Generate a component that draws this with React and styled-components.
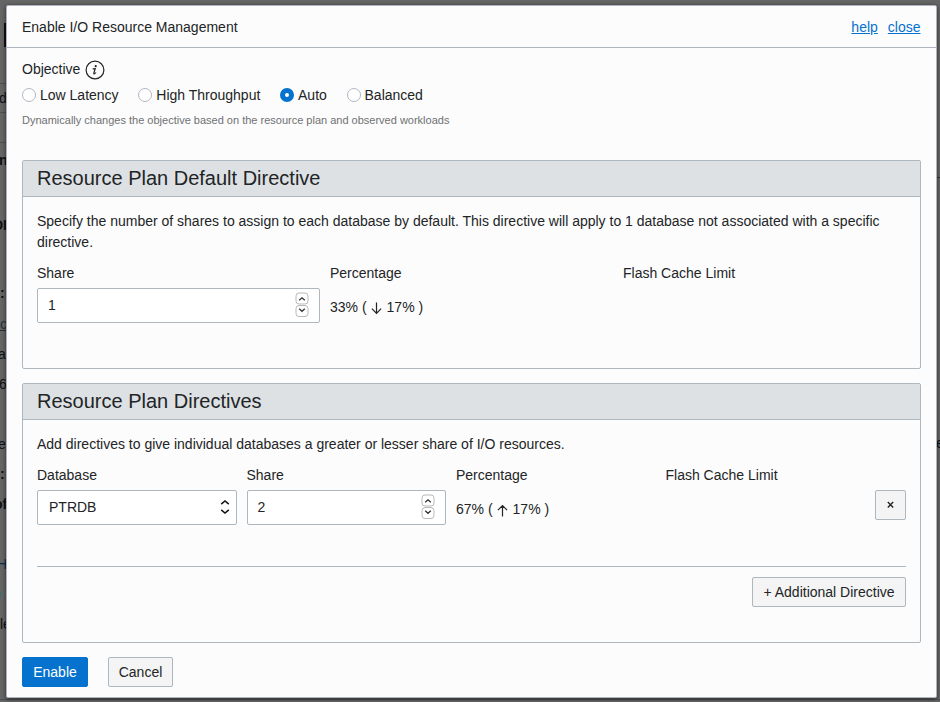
import React from "react";
import styled, { createGlobalStyle } from "styled-components";

const GlobalStyle = createGlobalStyle`
  *, *::before, *::after { box-sizing: border-box; }
  body {
    margin: 0;
    overflow: hidden;
    font: 14px/21px "Liberation Sans", Arial, sans-serif;
    color: #222426;
  }
  button, input { font: inherit; color: inherit; }
`;

const Page = styled.div`
  position: relative;
  width: 940px;
  height: 702px;
  overflow: hidden;
  background: #656565;
`;

const PageText = styled.span`
  position: absolute;
  left: ${(p) => p.$x}px;
  top: ${(p) => p.$y}px;
  line-height: 18px;
  white-space: nowrap;
  color: ${(p) => p.$color || "#101011"};
  font-weight: ${(p) => (p.$bold ? 700 : 400)};
  text-decoration: ${(p) => (p.$link ? "underline" : "none")};
`;

const PageMark = styled.span`
  position: absolute;
  left: ${(p) => p.$x}px;
  top: ${(p) => p.$y}px;
  width: ${(p) => p.$w}px;
  height: ${(p) => p.$h}px;
  background: ${(p) => p.$color || "#4d4f51"};
`;

const Dialog = styled.section`
  position: absolute;
  left: 6px;
  top: 5px;
  width: 931px;
  height: 693px;
  border: 1px solid #adb4c0;
  border-radius: 2px;
  background: #fcfcfc;
  box-shadow: 0 1px 4px rgba(0, 0, 0, 0.6);
`;

const Header = styled.header`
  display: flex;
  justify-content: space-between;
  height: 42px;
  padding: 11px 15.5px 0 15px;
  border-bottom: 1px solid #adb4c0;
`;

const Links = styled.nav`
  display: flex;
  gap: 10px;
`;

const Link = styled.a`
  color: #0572ce;
  text-decoration: underline;
`;

const Body = styled.div`
  padding: 11px 15px 0;
`;

const Objective = styled.div`
  display: flex;
  align-items: center;
  height: 21px;
  gap: 5px;
  svg { margin-top: 1px; }
`;

const Choices = styled.div`
  display: flex;
  gap: 19.7px;
  margin-top: 5px;
`;

const Choice = styled.label`
  display: flex;
  align-items: flex-start;
  gap: 4px;
  white-space: nowrap;
`;

const Radio = styled.span`
  width: 14px;
  height: 14px;
  margin-top: 3px;
  border-radius: 50%;
  border: ${(p) => (p.$on ? "5px solid #0572ce" : "1px solid #b1b8c2")};
  background: #fff;
`;

const Hint = styled.p`
  margin: 6px 0 0;
  font-size: 11px;
  line-height: 16px;
  color: #6f7173;
`;

const Panel = styled.section`
  height: ${(p) => p.$height}px;
  margin-top: ${(p) => p.$gap}px;
  border: 1px solid #adb7c0;
  border-radius: 2px;
`;

const PanelTitle = styled.h2`
  margin: 0;
  height: 36px;
  padding: 0 14px;
  border-bottom: 1px solid #adb7c0;
  background: #dde1e4;
  font-size: 20px;
  font-weight: 400;
  line-height: 34px;
`;

const PanelBody = styled.div`
  padding: 14px 14px 0;
`;

const Description = styled.p`
  margin: 0;
`;

const Fields = styled.div`
  display: grid;
  grid-template-columns: ${(p) => p.$columns};
  column-gap: 10px;
  margin-top: 10px;
`;

const Field = styled.div`
  display: flex;
  flex-direction: column;
`;

const Label = styled.span`
  height: 25px;
`;

const InputBox = styled.div`
  display: flex;
  align-items: flex-start;
  justify-content: space-between;
  height: 35px;
  padding: 0 ${(p) => p.$right || 10}px 0 ${(p) => p.$left || 10}px;
  border: 1px solid #adb7c0;
  border-radius: 2px;
  background: #fff;
`;

const Value = styled.span`
  line-height: 33px;
`;

const StepperIcon = styled.svg`
  margin-top: 3px;
`;

const SelectIcon = styled.svg`
  margin-top: 8px;
`;

const Percentage = styled.div`
  display: flex;
  align-items: center;
  height: 21px;
  margin-top: 9px;
  white-space: pre;
  svg { margin: 1px 5px 0 4px; }
`;

const Button = styled.button`
  display: inline-flex;
  align-items: center;
  justify-content: center;
  width: ${(p) => p.$width};
  height: 30px;
  padding: 0;
  border: 1px solid ${(p) => (p.$primary ? "#0572ce" : "#adb7c0")};
  border-radius: 2px;
  background: ${(p) => (p.$primary ? "#0572ce" : "#f4f4f4")};
  color: ${(p) => (p.$primary ? "#fff" : "#222426")};
`;

const RemoveCell = styled.div`
  padding-top: 25px;
`;

const AddRow = styled.div`
  display: flex;
  justify-content: flex-end;
  margin-top: 41px;
  padding-top: 10px;
  border-top: 1px solid #adb7c0;
`;

const Footer = styled.footer`
  display: flex;
  gap: 20px;
  margin-top: 14px;
`;

const InfoIcon = () => (
  <svg width="20" height="20" viewBox="0 0 20 20" fill="none" stroke="#222426">
    <circle cx="10" cy="10" r="8.9" strokeWidth="1.2" />
    <circle cx="10.7" cy="6.2" r="1.1" fill="#222426" stroke="none" />
    <path d="M7.7 8.9l2.5-.3L8.9 13q-.3 1.2.6.8 .8-.4 1.5-1.3" strokeWidth="1.2" />
  </svg>
);

const Stepper = () => (
  <StepperIcon width="14" height="26" viewBox="0 0 14 26" fill="none">
    <rect x="1" y="1" width="12" height="11" rx="3" stroke="#b9b9b9" />
    <rect x="1" y="13.5" width="12" height="11" rx="3" stroke="#b9b9b9" />
    <path d="M4.2 8.3L7 5.8l2.8 2.5M4.2 16.8L7 19.3 9.8 16.8" stroke="#333" strokeWidth="1.3" />
  </StepperIcon>
);

const SelectArrows = () => (
  <SelectIcon width="10" height="16" viewBox="0 0 10 16" fill="none" stroke="#111" strokeWidth="1.5">
    <path d="M1.2 5.1L5 1.9l3.8 3.2M1.2 10.9L5 14.1l3.8-3.2" />
  </SelectIcon>
);

const Arrow = ({ up }) => (
  <svg width="11" height="13" viewBox="0 0 11 13" fill="none" stroke="#222426" strokeWidth="1.2">
    <path d={up ? "M5.5 12.5V1.7M.9 6.1L5.5 1.5l4.6 4.6" : "M5.5.5v10.6M.9 6.7l4.6 4.6 4.6-4.6"} />
  </svg>
);

const RemoveIcon = () => (
  <svg width="7" height="8" viewBox="0 0 7 8" fill="none" stroke="#222426" strokeWidth="1.4">
    <path d="M.8 1L6.2 6.4M6.2 1L.8 6.4" />
  </svg>
);

function NumberInput({ value }) {
  return (
    <InputBox>
      <Value>{value}</Value>
      <Stepper />
    </InputBox>
  );
}

const choices = ["Low Latency", "High Throughput", "Auto", "Balanced"];

export default function App() {
  return (
    <Page>
      <GlobalStyle />
      <PageMark $x={4} $y={23} $w={3} $h={24} $color="#170d0d" />
      <PageMark $x={0} $y={83} $w={7} $h={1} />
      <PageMark $x={0} $y={112} $w={7} $h={1} />
      <PageMark $x={0} $y={142} $w={7} $h={1} />
      <PageMark $x={0} $y={699} $w={940} $h={1} />
      <PageMark $x={936} $y={177} $w={4} $h={1} $color="#333" />
      <PageText $x={-1} $y={89}>d</PageText>
      <PageText $x={-1} $y={151} $bold>n</PageText>
      <PageText $x={-7} $y={216} $bold>DI</PageText>
      <PageText $x={0} $y={284} $bold>:</PageText>
      <PageText $x={0} $y={315} $color="#27313a" $link>c</PageText>
      <PageText $x={-2} $y={345}>ar</PageText>
      <PageText $x={-1} $y={375}>6</PageText>
      <PageText $x={-2} $y={435}>ex</PageText>
      <PageText $x={0} $y={465} $bold>:</PageText>
      <PageText $x={-6} $y={495} $bold>of</PageText>
      <PageText $x={-3} $y={555} $color="#0b2e4c">H</PageText>
      <PageMark $x={0} $y={591} $w={1} $h={7} $color="#39706b" />
      <PageText $x={0} $y={615}>le</PageText>
      <PageText $x={936} $y={434}>e</PageText>
      <Dialog role="dialog">
        <Header>
          <span>Enable I/O Resource Management</span>
          <Links>
            <Link>help</Link>
            <Link>close</Link>
          </Links>
        </Header>
        <Body>
          <Objective>
            <span>Objective</span>
            <InfoIcon />
          </Objective>
          <Choices>
            {choices.map((name) => (
              <Choice key={name}>
                <Radio $on={name === "Auto"} />
                {name}
              </Choice>
            ))}
          </Choices>
          <Hint>Dynamically changes the objective based on the resource plan and observed workloads</Hint>

          <Panel $height={209} $gap={32}>
            <PanelTitle>Resource Plan Default Directive</PanelTitle>
            <PanelBody>
              <Description>
                Specify the number of shares to assign to each database by default. This directive will apply to 1 database not associated with a specific directive.
              </Description>
              <Fields $columns="repeat(3, 1fr)">
                <Field>
                  <Label>Share</Label>
                  <NumberInput value="1" />
                </Field>
                <Field>
                  <Label>Percentage</Label>
                  <Percentage>33% (<Arrow />17% )</Percentage>
                </Field>
                <Field>
                  <Label>Flash Cache Limit</Label>
                </Field>
              </Fields>
            </PanelBody>
          </Panel>

          <Panel $height={260} $gap={14}>
            <PanelTitle>Resource Plan Directives</PanelTitle>
            <PanelBody>
              <Description>Add directives to give individual databases a greater or lesser share of I/O resources.</Description>
              <Fields $columns="repeat(4, 1fr) 31px">
                <Field>
                  <Label>Database</Label>
                  <InputBox $left={11} $right={6}>
                    <Value>PTRDB</Value>
                    <SelectArrows />
                  </InputBox>
                </Field>
                <Field>
                  <Label>Share</Label>
                  <NumberInput value="2" />
                </Field>
                <Field>
                  <Label>Percentage</Label>
                  <Percentage>67% (<Arrow up />17% )</Percentage>
                </Field>
                <Field>
                  <Label>Flash Cache Limit</Label>
                </Field>
                <RemoveCell>
                  <Button $width="31px" aria-label="Remove">
                    <RemoveIcon />
                  </Button>
                </RemoveCell>
              </Fields>
              <AddRow>
                <Button $width="154px">+ Additional Directive</Button>
              </AddRow>
            </PanelBody>
          </Panel>
          <Footer>
            <Button $primary $width="66px">Enable</Button>
            <Button $width="65px">Cancel</Button>
          </Footer>
        </Body>
      </Dialog>
    </Page>
  );
}
